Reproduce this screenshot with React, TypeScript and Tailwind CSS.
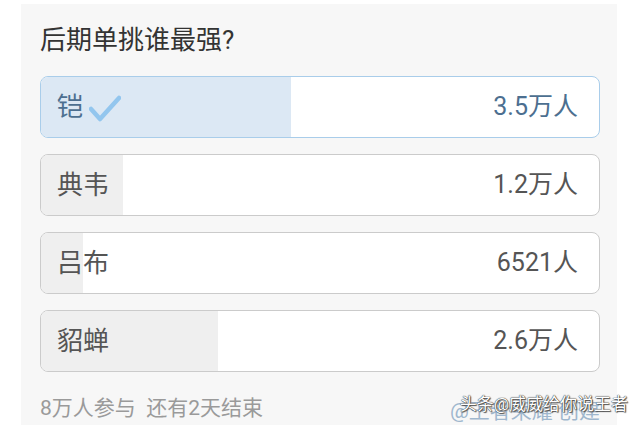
const options = [
  { name: "铠", count: "3.5万人", fill: 251, picked: true },
  { name: "典韦", count: "1.2万人", fill: 83, picked: false },
  { name: "吕布", count: "6521人", fill: 43, picked: false },
  { name: "貂蝉", count: "2.6万人", fill: 178, picked: false },
]

export default function App() {
  return (
    <div
      className="w-[640px] h-[425px] bg-white overflow-hidden"
      style={{ fontFamily: 'Roboto, "Noto Sans CJK SC", sans-serif' }}
    >
      <div className="ml-[21px] mt-[4px] w-[596px] h-[421px] bg-[#f7f7f7] px-[19px] pt-[18px]">
        {/* Title */}
        <h1 className="h-[36px] leading-[36px] text-[26px] text-[#333333] mb-[18px]">后期单挑谁最强?</h1>

        {/* Options */}
        <div className="flex flex-col gap-[16px] w-[560px]">
          {options.map((o) => (
            <div
              key={o.name}
              className={`relative h-[62px] rounded-[8px] border overflow-hidden bg-white ${
                o.picked ? "border-[#a9cdea]" : "border-[#cbcbcb]"
              }`}
            >
              <div
                className={`absolute left-0 top-0 bottom-0 ${o.picked ? "bg-[#dce8f4]" : "bg-[#efefef]"}`}
                style={{ width: o.fill - 1 }}
              />
              <div className="relative flex items-center justify-between h-full pl-[16px] pr-[21px]">
                <div className="flex items-center gap-[6px]">
                  <span className={`text-[26px] ${o.picked ? "text-[#4c6f90]" : "text-[#555555]"}`}>{o.name}</span>
                  {o.picked && (
                    <svg width="32" height="28" viewBox="0 0 32 28" className="mt-[4px]">
                      <path d="M2 14 L11 24 L30 3" fill="none" stroke="#93c6ee" strokeWidth="4.5" strokeLinecap="round" strokeLinejoin="round" />
                    </svg>
                  )}
                </div>
                <span className={`text-[25px] ${o.picked ? "text-[#4c6f90]" : "text-[#555555]"}`}>{o.count}</span>
              </div>
            </div>
          ))}
        </div>

        {/* Footer */}
        <div className="relative flex items-center justify-between w-[560px] mt-[22px] h-[30px]">
          <span className="text-[21px] text-[#9a9a9a]">8万人参与&nbsp;&nbsp;还有2天结束</span>
          <span className="text-[21px] text-[#9fb7ce] mt-[6px]">@王者荣耀 创建</span>
          <span
            className="absolute right-[-28px] top-[-2px] text-[17px] text-white"
            style={{ textShadow: "0 0 1px #333, 0 0 1px #333, 1px 1px 1px #555" }}
          >
            头条@威威给你说王者
          </span>
        </div>
      </div>
    </div>
  )
}
